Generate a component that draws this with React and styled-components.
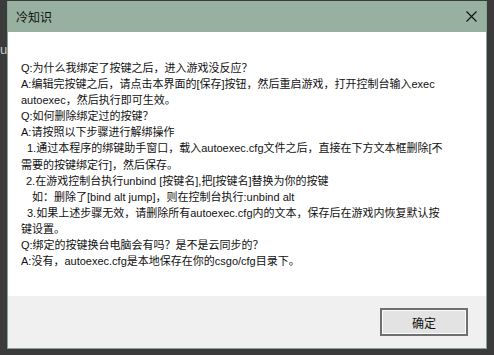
import styled, { createGlobalStyle } from "styled-components";

const GlobalStyle = createGlobalStyle`
  html, body {
    margin: 0;
    padding: 0;
    background: #3d3d3d;
    overflow: hidden;
  }
`;

const Desktop = styled.div`
  position: relative;
  width: 494px;
  height: 355px;
  padding: 1px 0 0 7px;
  box-sizing: border-box;
  background: #3b3b3b;
  font-family: "Microsoft YaHei", "Liberation Sans", "Noto Sans CJK SC", sans-serif;
`;

const BackText = styled.span`
  position: absolute;
  left: 0;
  top: 42px;
  color: #c9c9c9;
  font-size: 13px;
`;

const Dialog = styled.div`
  width: 480px;
  height: 348px;
  box-sizing: border-box;
  border: 1px solid #86a592;
  border-top: none;
  display: flex;
  flex-direction: column;
  background: #ffffff;
`;

const TitleBar = styled.div`
  height: 31px;
  flex: none;
  display: flex;
  align-items: center;
  justify-content: space-between;
  padding-left: 8px;
  background: #97b09f;
  color: #111;
  font-size: 12px;
`;

const CloseButton = styled.div`
  width: 30px;
  height: 31px;
  display: flex;
  align-items: center;
  justify-content: center;
`;

const Body = styled.div`
  flex: 1;
  padding: 28px 0 0 13px;
  background: #ffffff;
`;

const Line = styled.div`
  height: 16.1px;
  line-height: 16.1px;
  padding-left: ${(p) => p.$indent || 0}px;
  font-size: 11px;
  color: #111;
  white-space: pre;
`;

const Footer = styled.div`
  height: 52px;
  flex: none;
  display: flex;
  justify-content: flex-end;
  padding: 12px 18px 0 0;
  box-sizing: border-box;
  background: #f0f0f0;
`;

const OkButton = styled.div`
  width: 88px;
  height: 28px;
  box-sizing: border-box;
  border: 2px solid #6f6f6f;
  box-shadow: inset 0 0 0 1px #fbfbfb;
  background: #e3e3e3;
  display: flex;
  align-items: center;
  justify-content: center;
  font-size: 12px;
  color: #111;
`;

const lines = [
  ["Q:为什么我绑定了按键之后，进入游戏没反应？", 0],
  ["A:编辑完按键之后，请点击本界面的[保存]按钮，然后重启游戏，打开控制台输入exec", 0],
  ["autoexec，然后执行即可生效。", 0],
  ["Q:如何删除绑定过的按键？", 0],
  ["A:请按照以下步骤进行解绑操作", 0],
  ["1.通过本程序的绑键助手窗口，载入autoexec.cfg文件之后，直接在下方文本框删除[不", 6],
  ["需要的按键绑定行]，然后保存。", 0],
  ["2.在游戏控制台执行unbind [按键名],把[按键名]替换为你的按键", 5],
  ["如：删除了[bind alt jump]，则在控制台执行:unbind alt", 11],
  ["3.如果上述步骤无效，请删除所有autoexec.cfg内的文本，保存后在游戏内恢复默认按", 6],
  ["键设置。", 0],
  ["Q:绑定的按键换台电脑会有吗？是不是云同步的？", 0],
  ["A:没有，autoexec.cfg是本地保存在你的csgo/cfg目录下。", 0],
];

export default function App() {
  return (
    <Desktop>
      <GlobalStyle />
      <BackText>u</BackText>
      <Dialog>
        <TitleBar>
          <span>冷知识</span>
          <CloseButton>
            <svg width="11" height="11" viewBox="0 0 11 11">
              <path d="M0.5 0.5L10.5 10.5M10.5 0.5L0.5 10.5" stroke="#111" strokeWidth="1.1" />
            </svg>
          </CloseButton>
        </TitleBar>
        <Body>
          {lines.map(([text, indent], i) => (
            <Line key={i} $indent={indent}>
              {text}
            </Line>
          ))}
        </Body>
        <Footer>
          <OkButton>确定</OkButton>
        </Footer>
      </Dialog>
    </Desktop>
  );
}
